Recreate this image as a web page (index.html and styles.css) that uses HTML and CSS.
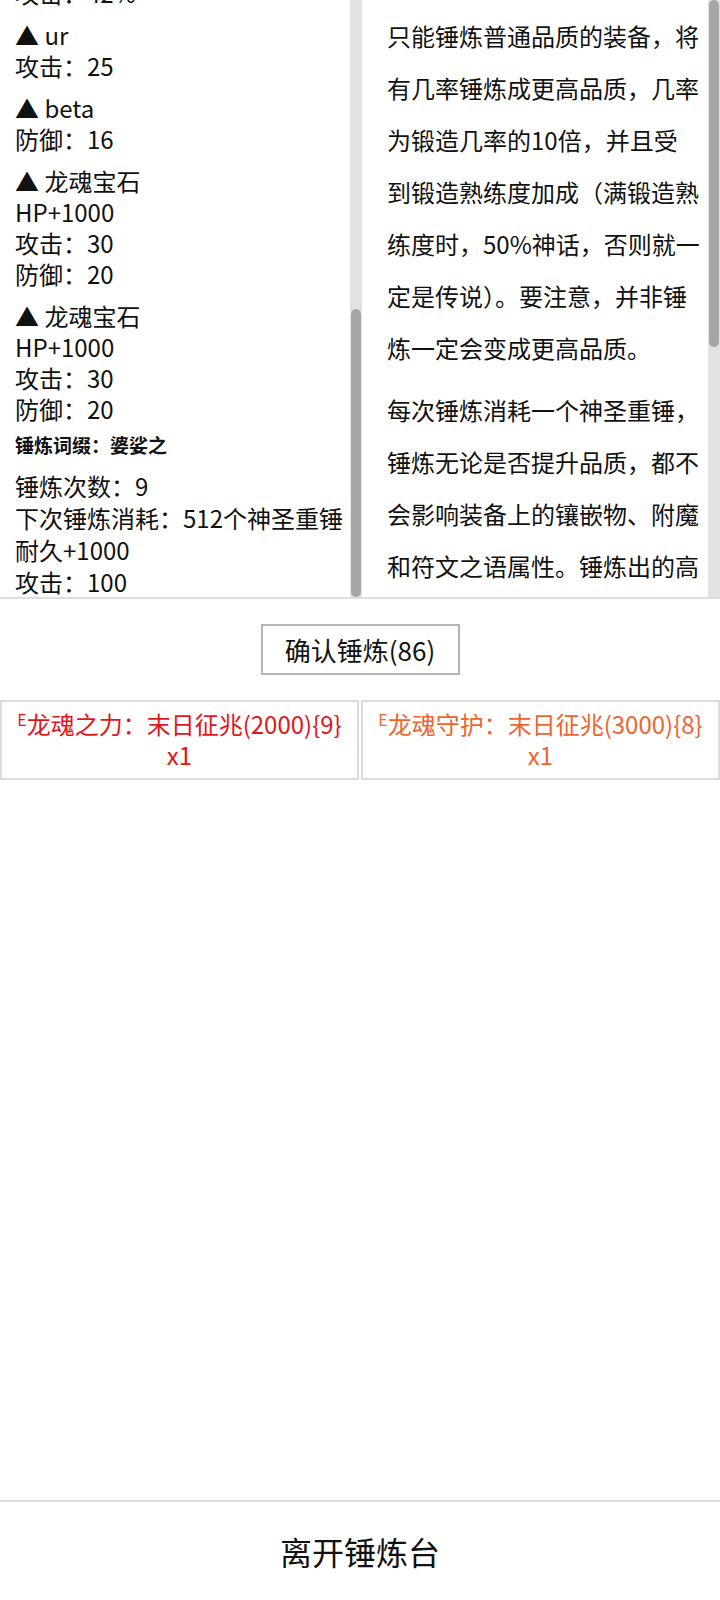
FILE: index.html
```html
<!DOCTYPE html>
<html lang="zh-CN">
<head>
<meta charset="utf-8">
<title>锤炼台</title>
<link rel="stylesheet" href="styles.css">
</head>
<body>
<div class="page">
  <div class="panels">
    <div class="panel panel-left">
      <div class="viewport">
        <div class="stats">
          <div class="block"><div>攻击：42%</div></div>
          <div class="block"><div>▲ ur</div><div>攻击：25</div></div>
          <div class="block"><div>▲ beta</div><div>防御：16</div></div>
          <div class="block"><div>▲ 龙魂宝石</div><div>HP+1000</div><div>攻击：30</div><div>防御：20</div></div>
          <div class="block"><div>▲ 龙魂宝石</div><div>HP+1000</div><div>攻击：30</div><div>防御：20</div></div>
          <div class="affix">锤炼词缀：婆娑之</div>
          <div class="block block-last"><div>锤炼次数：9</div><div>下次锤炼消耗：512个神圣重锤</div><div>耐久+1000</div><div>攻击：100</div><div>防御：100</div></div>
        </div>
      </div>
      <div class="scrollbar"><div class="thumb thumb-left"></div></div>
    </div>
    <div class="panel panel-right">
      <div class="viewport">
        <div class="desc">
          <p>只能锤炼普通品质的装备，将有几率锤炼成更高品质，几率为锻造几率的10倍，并且受到锻造熟练度加成（满锻造熟练度时，50%神话，否则就一定是传说）。要注意，并非锤炼一定会变成更高品质。</p>
          <p>每次锤炼消耗一个神圣重锤，锤炼无论是否提升品质，都不会影响装备上的镶嵌物、附魔和符文之语属性。锤炼出的高品质装备将获得新的锤炼词缀。</p>
        </div>
      </div>
      <div class="scrollbar"><div class="thumb thumb-right"></div></div>
    </div>
  </div>

  <div class="action">
    <button class="confirm">确认锤炼(86)</button>
  </div>

  <div class="items">
    <div class="item item-red"><span class="tag">E</span>龙魂之力：末日征兆(2000){9}<br>x1</div>
    <div class="item item-orange"><span class="tag">E</span>龙魂守护：末日征兆(3000){8}<br>x1</div>
  </div>

  <div class="spacer"></div>

  <div class="footer">离开锤炼台</div>
</div>
</body>
</html>
```

FILE: styles.css
```css
html, body {
  margin: 0;
  padding: 0;
  background: #ffffff;
}

body {
  font-family: "Noto Sans CJK SC", "Noto Sans", sans-serif;
  color: #111111;
}

.page {
  width: 720px;
  height: 1600px;
  display: flex;
  flex-direction: column;
}

.panels {
  display: flex;
  height: 597px;
  border-bottom: 2px solid #dedede;
  flex-shrink: 0;
}

.panel {
  display: flex;
  height: 100%;
}

.panel-left {
  width: 362px;
}

.panel-right {
  width: 358px;
}

.viewport {
  flex: 1;
  overflow: hidden;
}

.scrollbar {
  width: 12px;
  background: #e2e2e2;
  display: flex;
  flex-direction: column;
}

.thumb {
  background: #a6a6a6;
  border-radius: 5px;
  margin-left: 1px;
  margin-right: 1px;
}

.thumb-left {
  margin-top: 309px;
  height: 288px;
}

.thumb-right {
  margin-top: 0;
  height: 347px;
}

.stats {
  margin-top: -23.5px;
  padding-left: 15px;
  font-size: 24px;
  line-height: 31px;
  white-space: nowrap;
}

.block {
  margin-bottom: 11px;
}

.block-last {
  line-height: 32px;
}

.affix {
  font-size: 19px;
  font-weight: bold;
  line-height: 25px;
  margin: -3px 0 13px;
}

.desc {
  padding: 10px 8px 0 25px;
  font-size: 24px;
  line-height: 52px;
}

.desc p {
  margin: 0 0 10px;
}

.action {
  display: flex;
  justify-content: center;
  padding-top: 25px;
  height: 78px;
  box-sizing: border-box;
}

.confirm {
  width: 199px;
  height: 51px;
  background: #ffffff;
  border: 2px solid #b4b4b4;
  font-family: "Noto Sans CJK SC", "Noto Sans", sans-serif;
  font-size: 26px;
  color: #111111;
  padding: 0;
}

.items {
  display: grid;
  grid-template-columns: 1fr 1fr;
  gap: 2px;
  margin-top: 23px;
}

.item {
  border: 2px solid #dcdcdc;
  height: 80px;
  box-sizing: border-box;
  text-align: center;
  font-size: 24px;
  line-height: 31px;
  padding-top: 6px;
  white-space: nowrap;
}

.tag {
  font-size: 16px;
  vertical-align: top;
  line-height: 22px;
}

.item-red {
  color: #e0161b;
}

.item-orange {
  color: #ee6530;
}

.spacer {
  flex: 1;
}

.footer {
  height: 98px;
  border-top: 2px solid #dedede;
  display: flex;
  align-items: center;
  justify-content: center;
  font-size: 32px;
  color: #111111;
}
```
